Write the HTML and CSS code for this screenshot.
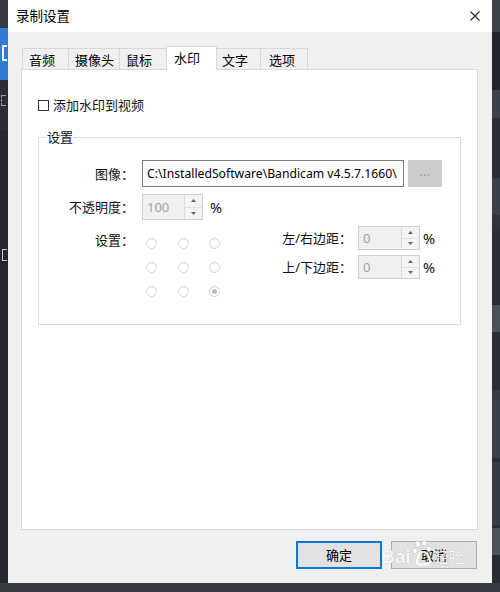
FILE: index.html
```html
<!DOCTYPE html>
<html lang="zh-CN">
<head>
<meta charset="utf-8">
<title>录制设置</title>
<link rel="stylesheet" href="styles.css">
</head>
<body>
<div class="screen">
  <div class="strip-left">
    <div class="ls-mark"></div>
    <div class="ls-dash"></div>
    <div class="ls-square"></div>
  </div>
  <div class="dialog">
    <div class="titlebar">
      <span class="title">录制设置</span>
      <svg class="close" width="10" height="10" viewBox="0 0 10 10"><path d="M0.5 0.5 L9.5 9.5 M9.5 0.5 L0.5 9.5" stroke="#222" stroke-width="1.1" fill="none"/></svg>
    </div>
    <div class="body">
      <div class="tabs">
        <div class="tab">音频</div>
        <div class="tab">摄像头</div>
        <div class="tab">鼠标</div>
        <div class="tab active">水印</div>
        <div class="tab">文字</div>
        <div class="tab">选项</div>
      </div>
      <div class="panel">
        <div class="check"><span class="box"></span><span>添加水印到视频</span></div>
        <fieldset class="group">
          <legend>设置</legend>
          <div class="row row-image">
            <span class="lbl">图像：</span>
            <div class="textbox">C:\InstalledSoftware\Bandicam v4.5.7.1660\</div>
            <div class="browse">...</div>
          </div>
          <div class="row row-opacity">
            <span class="lbl">不透明度：</span>
            <div class="spin spin-big">
              <span class="val">100</span>
              <span class="arrows">
                <span class="arr"><svg width="5" height="3" viewBox="0 0 5 3"><path d="M0 3 L2.5 0 L5 3 Z" fill="#666"/></svg></span>
                <span class="arr arr-down"><svg width="5" height="3" viewBox="0 0 5 3"><path d="M0 0 L2.5 3 L5 0 Z" fill="#666"/></svg></span>
              </span>
            </div>
            <span class="pct pct-big">%</span>
          </div>
          <div class="row row-pos">
            <span class="lbl lbl-top">设置：</span>
            <div class="radios">
              <span class="radio"></span><span class="radio"></span><span class="radio"></span>
              <span class="radio"></span><span class="radio"></span><span class="radio"></span>
              <span class="radio"></span><span class="radio"></span><span class="radio checked"></span>
            </div>
            <div class="margins">
              <div class="mrow">
                <span class="mlbl">左/右边距：</span>
                <div class="spin spin-small">
                  <span class="val">0</span>
                  <span class="arrows">
                    <span class="arr"><svg width="5" height="3" viewBox="0 0 5 3"><path d="M0 3 L2.5 0 L5 3 Z" fill="#666"/></svg></span>
                    <span class="arr arr-down"><svg width="5" height="3" viewBox="0 0 5 3"><path d="M0 0 L2.5 3 L5 0 Z" fill="#666"/></svg></span>
                  </span>
                </div>
                <span class="pct">%</span>
              </div>
              <div class="mrow">
                <span class="mlbl">上/下边距：</span>
                <div class="spin spin-small">
                  <span class="val">0</span>
                  <span class="arrows">
                    <span class="arr"><svg width="5" height="3" viewBox="0 0 5 3"><path d="M0 3 L2.5 0 L5 3 Z" fill="#666"/></svg></span>
                    <span class="arr arr-down"><svg width="5" height="3" viewBox="0 0 5 3"><path d="M0 0 L2.5 3 L5 0 Z" fill="#666"/></svg></span>
                  </span>
                </div>
                <span class="pct">%</span>
              </div>
            </div>
          </div>
        </fieldset>
      </div>
    </div>
    <div class="footer">
      <button class="btn btn-primary">确定</button>
      <button class="btn">取消</button>
      <div class="watermark">
        <span class="wm-bai">Bai</span>
        <svg class="wm-paw" width="24" height="26" viewBox="0 0 24 26">
          <ellipse cx="6" cy="4" rx="2.6" ry="3" fill="#fff" stroke="#bbb" stroke-width="0.6"/>
          <ellipse cx="12.5" cy="3" rx="2.6" ry="3" fill="#fff" stroke="#bbb" stroke-width="0.6"/>
          <ellipse cx="3" cy="11" rx="2.4" ry="2.8" fill="#fff" stroke="#bbb" stroke-width="0.6"/>
          <ellipse cx="17" cy="9" rx="2.4" ry="2.8" fill="#fff" stroke="#bbb" stroke-width="0.6"/>
          <path d="M5 22 C5 15 9 12 11 12 C14 12 18 16 18 21 C18 25 14 25 11.5 24 C9 25 5 25 5 22 Z" fill="none" stroke="#fff" stroke-width="2.2"/>
        </svg>
        <span class="wm-jy">经验</span>
      </div>
    </div>
  </div>
  <div class="strip-right"></div>
  <div class="strip-bottom"></div>
</div>
</body>
</html>
```

FILE: styles.css
```css
* { box-sizing: border-box; }

html, body {
  margin: 0;
  padding: 0;
}

body {
  width: 500px;
  height: 592px;
  overflow: hidden;
  background: #2b3038;
  font-family: "Noto Sans", "Noto Sans CJK SC", sans-serif;
  font-size: 13px;
  line-height: 18px;
  color: #111;
}

.screen {
  display: grid;
  grid-template-columns: 8px 484px 8px;
  grid-template-rows: 583px 9px;
  width: 500px;
  height: 592px;
}

/* background application strips */
.strip-left {
  display: flex;
  flex-direction: column;
  background: linear-gradient(to bottom,
    #363b43 0 28px,
    #2f7bd6 28px 80px,
    #2a2f36 80px 130px,
    #24282f 130px 583px);
}

.ls-mark {
  width: 5px;
  height: 16px;
  margin: 45px 0 0 2px;
  border: 2px solid #f2f6fb;
  border-right: none;
}

.ls-dash {
  width: 5px;
  height: 11px;
  margin: 34px 0 0 1px;
  border: 1px dashed #9aa0a8;
  border-right: none;
}

.ls-square {
  width: 5px;
  height: 12px;
  margin: 143px 0 0 2px;
  border: 1px solid #c8ccd2;
  border-right: none;
}

.strip-right {
  background: linear-gradient(to bottom,
    #3d434b 0 32px,
    #21262d 32px 90px,
    #3b414a 90px 118px,
    #2a2f37 118px 178px,
    #3a3f47 178px 180px,
    #3a4049 180px 215px,
    #30353d 215px 225px,
    #2b3038 225px 305px,
    #4a5159 305px 332px,
    #2a2f37 332px 390px,
    #353a43 390px 400px,
    #3a4049 400px 458px,
    #2a2f37 458px 462px,
    #363c45 462px 525px,
    #2a2f37 525px 528px,
    #4b525a 528px 555px,
    #272c33 555px 583px);
}

.strip-bottom {
  grid-column: 1 / 4;
  background: #353a43;
}

/* dialog */
.dialog {
  display: flex;
  flex-direction: column;
  background: #f0f0f0;
  height: 583px;
}

.titlebar {
  height: 32px;
  flex: none;
  background: #ffffff;
  display: flex;
  align-items: center;
  padding: 0 12px 0 8px;
}

.title {
  flex: 1;
  font-size: 13.5px;
  color: #000;
}

.close {
  display: block;
}

.body {
  flex: 1;
  display: flex;
  flex-direction: column;
  padding: 14px 14px 0 13px;
  min-height: 0;
}

.tabs {
  display: flex;
  align-items: flex-end;
  height: 23px;
  flex: none;
  padding-left: 1px;
  position: relative;
  z-index: 1;
}

.tab {
  height: 21px;
  padding: 2px 0 0 6px;
  background: #f0f0f0;
  border: 1px solid #d9d9d9;
  border-bottom: none;
  margin-left: -1px;
  white-space: nowrap;
  color: #000;
}

.tab:nth-child(1) { width: 47px; margin-left: 0; }
.tab:nth-child(2) { width: 52px; }
.tab:nth-child(3) { width: 48px; }
.tab:nth-child(4) { width: 51px; }
.tab:nth-child(5) { width: 45px; padding-left: 5px; }
.tab:nth-child(6) { width: 48px; padding-left: 8px; }

.tab.active {
  height: 24px;
  background: #ffffff;
  padding-left: 7px;
  margin-bottom: -1px;
}

.panel {
  flex: 1;
  background: #ffffff;
  border: 1px solid #d9d9d9;
  padding: 26px 16px 0 16px;
}

.check {
  display: flex;
  align-items: center;
  height: 18px;
}

.box {
  width: 11px;
  height: 11px;
  border: 1px solid #333333;
  background: #fff;
  margin-right: 4px;
}

.group {
  margin: 14px 0 0 0;
  padding: 14px 18px 27px 0;
  border: 1px solid #dcdcdc;
  min-inline-size: 0;
}

.group legend {
  margin-left: 7px;
  padding: 0 1px;
  line-height: 18px;
}

.row {
  display: flex;
  align-items: center;
}

.row-image { height: 27px; margin-bottom: 7px; }
.row-opacity { height: 26px; margin-bottom: 6px; }
.row-pos { align-items: flex-start; }

.lbl {
  width: 95px;
  text-align: right;
  margin-right: 8px;
  flex: none;
  white-space: nowrap;
}

.lbl-top {
  padding-top: 5px;
}

.textbox {
  width: 262px;
  height: 27px;
  border: 1px solid #7a7a7a;
  background: #fff;
  padding: 0 0 0 4px;
  line-height: 25px;
  white-space: nowrap;
  overflow: hidden;
  font-size: 12.2px;
  color: #000;
}

.browse {
  width: 34px;
  height: 27px;
  margin-left: 4px;
  background: #cccccc;
  color: #9c9c9c;
  text-align: center;
  line-height: 24px;
  font-size: 12px;
  letter-spacing: 0.5px;
}

.spin {
  display: flex;
  border: 1px solid #cfcfcf;
  background: #f0f0f0;
  flex: none;
}

.spin-big { width: 61px; height: 26px; }
.spin-small { width: 62px; height: 24px; margin-left: 6px; }

.val {
  flex: 1;
  padding-left: 4px;
  color: #a3a3a3;
  display: flex;
  align-items: center;
}

.arrows {
  width: 18px;
  display: flex;
  flex-direction: column;
  border-left: 1px solid #dcdcdc;
  background: #f4f4f4;
}

.arr {
  flex: 1;
  display: flex;
  align-items: center;
  justify-content: center;
}

.arr svg { display: block; }

.arr-down {
  border-top: 1px solid #e2e2e2;
}

.pct {
  margin-left: 3px;
  color: #111;
  font-size: 14.5px;
}

.pct-big {
  margin-left: 7px;
}

.radios {
  display: grid;
  grid-template-columns: repeat(3, 11px);
  grid-auto-rows: 11px;
  column-gap: 20.5px;
  row-gap: 13px;
  padding: 12px 0 0 4px;
}

.radio {
  width: 11px;
  height: 11px;
  border: 1px solid #d2d2d2;
  border-radius: 50%;
  background: #fff;
  display: flex;
  align-items: center;
  justify-content: center;
}

.radio.checked::after {
  content: "";
  width: 5px;
  height: 5px;
  border-radius: 50%;
  background: #bdbdbd;
}

.margins {
  margin-left: auto;
  display: flex;
  flex-direction: column;
  gap: 5px;
  width: 160px;
}

.mrow {
  display: flex;
  align-items: center;
  height: 24px;
}

.mlbl {
  width: 70px;
  text-align: right;
  white-space: nowrap;
  flex: none;
}

/* footer */
.footer {
  height: 53px;
  flex: none;
  display: flex;
  justify-content: flex-end;
  align-items: flex-start;
  gap: 9px;
  padding: 11px 15px 0 0;
  position: relative;
}

.btn {
  width: 86px;
  height: 28px;
  margin: 0;
  padding: 0;
  background: #e1e1e1;
  border: 1px solid #adadad;
  font-family: "Noto Sans", "Noto Sans CJK SC", sans-serif;
  font-size: 13px;
  color: #000;
  line-height: 18px;
}

.btn-primary {
  border: 2px solid #0b78d7;
}

.watermark {
  position: absolute;
  left: 373px;
  top: 9px;
  display: flex;
  align-items: center;
  color: rgba(255, 255, 255, 0.92);
  text-shadow: 0 0 1px rgba(120, 120, 120, 0.6);
  pointer-events: none;
}

.wm-bai {
  font-family: "Liberation Sans", sans-serif;
  font-size: 19px;
  font-weight: bold;
  line-height: 20px;
  margin-top: 8px;
}

.wm-paw {
  display: block;
  margin-left: 1px;
  opacity: 0.9;
}

.wm-jy {
  font-family: "Noto Sans CJK SC", sans-serif;
  font-size: 15px;
  line-height: 20px;
  margin-top: 8px;
  margin-left: -2px;
}
```
